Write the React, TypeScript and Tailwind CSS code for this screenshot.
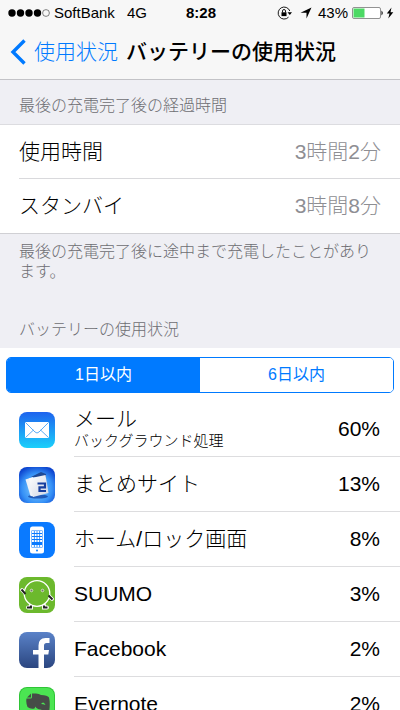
import { ReactNode, useState } from "react";

interface IUsageRow {
    label: string;
    value: string;
}

interface IAppRow {
    name: string;
    detail?: string;
    percent: number;
    icon: ReactNode;
}

const MailIcon = () => (
    <svg viewBox="0 0 36 36" className="size-9">
        <defs>
            <linearGradient id="mail-bg" x1="0" y1="0" x2="0" y2="1">
                <stop offset="0" stopColor="#1e63ee" />
                <stop offset="1" stopColor="#1bd0fb" />
            </linearGradient>
        </defs>
        <rect width="36" height="36" rx="8" fill="url(#mail-bg)" />
        <rect x="6" y="10" width="24" height="16" rx="1" fill="#fff" />
        <path d="M6.500 10.500L16 20q2 2 4 0l9.500-9.500M6.500 25.500l8-7.500M29.500 25.500l-8-7.500" fill="none" stroke="#4aa3f3" strokeWidth="0.9" />
    </svg>
);

const MatomeIcon = () => (
    <svg viewBox="0 0 36 36" className="size-9">
        <defs>
            <radialGradient id="matome-bg" cx="0.5" cy="0.6" r="0.65">
                <stop offset="0" stopColor="#8ad4ff" />
                <stop offset="0.65" stopColor="#3590f6" />
                <stop offset="1" stopColor="#0d45cf" />
            </radialGradient>
            <linearGradient id="matome-paper" x1="0" y1="0" x2="1" y2="1">
                <stop offset="0" stopColor="#fff" />
                <stop offset="1" stopColor="#cfd6e4" />
            </linearGradient>
        </defs>
        <rect width="36" height="36" rx="8" fill="url(#matome-bg)" />
        <ellipse cx="19" cy="29.500" rx="10" ry="2" fill="#0b3a9c" opacity="0.7" />
        <path d="M12 10L22 5l5 2v4z" fill="#1f4a96" />
        <path d="M6.500 12.500L14 10l1 19.500-3.500-.5z" fill="#eef2f8" />
        <path d="M10 11.500l16.500-3.500L29.500 26l-15.500 4z" fill="url(#matome-paper)" />
        <path d="M18.500 16.500H26v3.800h-5.500V24H27" fill="none" stroke="#173f9f" strokeWidth="2.200" />
    </svg>
);

const HomeLockIcon = () => (
    <svg viewBox="0 0 36 36" className="size-9">
        <rect width="36" height="36" rx="8" fill="#0a7aff" />
        <rect x="11" y="4.500" width="14" height="27" rx="2.500" fill="#fff" />
        <rect x="12.500" y="8.500" width="11" height="17" fill="#0a7aff" />
        <path d="M13 10h10M13 13h10M13 16h10M13 19h10M13 24h10" stroke="#fff" strokeWidth="1.800" strokeDasharray="1.900 0.800" />
        <circle cx="18" cy="28.500" r="1" fill="#0a7aff" />
    </svg>
);

const SuumoIcon = () => (
    <svg viewBox="0 0 36 36" className="size-9">
        <rect width="36" height="36" rx="8" fill="#6cb92d" />
        <path d="M3 13l3.500 3.500M33 22l-3-3M12 28v2.500H9M25 28v2.500h3" fill="none" stroke="#fff" strokeWidth="3.800" strokeLinecap="round" />
        <circle cx="18" cy="16.500" r="12.800" fill="#6cb92d" stroke="#fff" strokeWidth="1.300" />
        <path d="M2.500 12.500l4 4.500M33.500 22.500l-4-4M12 28.500v2H8M25 28.500v2h3.500" fill="none" stroke="#222" strokeWidth="1.900" />
        <circle cx="12.500" cy="13.500" r="1.300" fill="#777" stroke="#dfeecf" strokeWidth="0.8" />
        <circle cx="23.500" cy="13.500" r="1.300" fill="#777" stroke="#dfeecf" strokeWidth="0.8" />
    </svg>
);

const FacebookIcon = () => (
    <svg viewBox="0 0 36 36" className="size-9">
        <defs>
            <linearGradient id="fb-bg" x1="0" y1="0" x2="0" y2="1">
                <stop offset="0" stopColor="#5a82c8" />
                <stop offset="1" stopColor="#2b4680" />
            </linearGradient>
        </defs>
        <rect width="36" height="36" rx="8" fill="url(#fb-bg)" />
        <path d="M19.500 36V22.500H14V18h5.500v-4.500q0-7.500 7-7.500H30.500v5H27.500q-2.500 0-2.500 2.500V18H30l-.7 4.500H25V36z" fill="#fff" />
    </svg>
);

const EvernoteIcon = () => (
    <svg viewBox="0 0 36 36" className="size-9">
        <rect width="36" height="36" rx="8" fill="#2fc536" />
        <rect x="1" y="1" width="34" height="34" rx="7" fill="#4be552" />
        <path d="M13 6.500v3.500q0 1.500-1.500 1.500H7.500q-.8 4 1 8.500 3 2.500 7 1.500l1-2q1 2.500 5 3 3 .5 2.500 4h-3q-3 4 2 5 6 1 7-6 1.500-9 0-15-1.500-2.500-8-2.500-2-1.500-5-1.500z" fill="#464c47" />
        <path d="M12 6.500V10.500H8z" fill="#464c47" />
        <path d="M22 17q2.500-3.500 4.500 1-2.500-.8-4.500-1z" fill="#4be552" />
    </svg>
);

const StatusBar = () => (
    <div className="grid h-6 grid-cols-[1fr_auto_1fr] items-center pt-0.5 pr-1.5 pl-2 text-[15px]">
        <div className="flex items-center">
            <svg viewBox="0 0 42 8" className="mr-1 h-2 w-[42px]">
                <circle cx="4" cy="4" r="3.700" />
                <circle cx="12.500" cy="4" r="3.700" />
                <circle cx="21" cy="4" r="3.700" />
                <circle cx="29.500" cy="4" r="3.700" />
                <circle cx="38" cy="4" r="3.400" fill="none" stroke="#333" strokeWidth="0.600" />
            </svg>
            <span>SoftBank</span>
            <span className="ml-3">4G</span>
        </div>
        <span className="font-bold">8:28</span>
        <div className="flex items-center justify-end">
            <svg viewBox="0 0 15 14" className="mr-2 h-[14px] w-[15px]">
                <path d="M12.800 5A6 6 0 1 0 11.500 11.200" fill="none" stroke="#000" strokeWidth="0.900" />
                <path d="M10.500 6.300h4.500l-2.200 2.700z" />
                <rect x="4.500" y="6.300" width="5" height="3.800" />
                <path d="M5.500 6.500V5q0-1.500 1.500-1.500T8.500 5v1.500" fill="none" stroke="#000" strokeWidth="0.900" />
            </svg>
            <svg viewBox="0 0 12 12" className="mr-1.5 size-3">
                <path d="M11.500 0.500L6.500 11.500V5.800H0.500z" />
            </svg>
            <span>43%</span>
            <svg viewBox="0 0 32 12" className="ml-1 h-3 w-8">
                <rect x="0.500" y="0.500" width="28" height="11" rx="1.500" fill="#fff" stroke="#777" strokeWidth="0.800" />
                <rect x="1.500" y="1.500" width="11" height="9" fill="#4cd964" />
                <path d="M29.500 3.500q2.500 2.500 0 5z" />
            </svg>
            <svg viewBox="0 0 8 12" className="ml-0.5 h-3 w-2">
                <path d="M5.500 0.500L0.800 6.500h2.700L2.300 11.500 7.300 5.300H4.500z" />
            </svg>
        </div>
    </div>
);

const NavBar = () => (
    <nav className="flex h-[55px] items-center pl-2.5 text-[21px]">
        <a href="#usage" className="flex items-center font-light text-[#007aff]">
            <svg viewBox="0 0 16 26" className="mr-2 h-[26px] w-4">
                <path d="M14.500 1.500L3 13l11.500 11.500" fill="none" stroke="#007aff" strokeWidth="3.400" />
            </svg>
            使用状況
        </a>
        <h1 className="ml-2 font-medium whitespace-nowrap">バッテリーの使用状況</h1>
    </nav>
);

const usage: IUsageRow[] = [
    { label: "使用時間", value: "3時間2分" },
    { label: "スタンバイ", value: "3時間8分" },
];

const apps: IAppRow[] = [
    { name: "メール", detail: "バックグラウンド処理", percent: 60, icon: <MailIcon /> },
    { name: "まとめサイト", percent: 13, icon: <MatomeIcon /> },
    { name: "ホーム/ロック画面", percent: 8, icon: <HomeLockIcon /> },
    { name: "SUUMO", percent: 3, icon: <SuumoIcon /> },
    { name: "Facebook", percent: 2, icon: <FacebookIcon /> },
    { name: "Evernote", percent: 2, icon: <EvernoteIcon /> },
];

const ranges = ["1日以内", "6日以内"];

const App = () => {
    const [range, setRange] = useState(ranges[0]);

    return (
        <div className="h-screen overflow-hidden bg-white font-['Liberation_Sans','Noto_Sans_CJK_JP',sans-serif] text-black">
            <header className="border-b border-[#c3c3c7] bg-[#f7f7f7]">
                <StatusBar />
                <NavBar />
            </header>
            <main>
                <h2 className="border-b border-[#dcdce0] bg-[#efeff4] px-[19px] pt-3.5 pb-1.5 text-base font-light text-[#6d6d72]">
                    最後の充電完了後の経過時間
                </h2>
                <dl className="pl-[19px] text-[21px] font-light">
                    {usage.map((row) => (
                        <div key={row.label} className="flex h-[54px] items-center justify-between border-b border-[#d9d9dc] pr-[19px] last:border-b-0">
                            <dt>{row.label}</dt>
                            <dd className="text-[#8e8e93]">{row.value}</dd>
                        </div>
                    ))}
                </dl>
                <section className="border-t border-[#d0d0d4] bg-[#efeff4] px-[19px] pt-2 pb-1.5 text-base font-light text-[#6d6d72]">
                    <p className="leading-5">最後の充電完了後に途中まで充電したことがあります。</p>
                    <h2 className="pt-9">バッテリーの使用状況</h2>
                </section>
                <div className="mx-1.5 mt-[9px] flex h-9 overflow-hidden rounded-[5px] border border-[#007aff]">
                    {ranges.map((item) => (
                        <button
                            key={item}
                            type="button"
                            aria-pressed={item === range}
                            onClick={() => setRange(item)}
                            className={item === range ? "flex-1 bg-[#007aff] text-base text-white" : "flex-1 bg-white text-base text-[#007aff]"}
                        >
                            {item}
                        </button>
                    ))}
                </div>
                <ul className="mt-[9px]">
                    {apps.map((app) => (
                        <li key={app.name} className="flex h-[55px] items-center pl-[19px]">
                            {app.icon}
                            <div className="ml-[19px] flex h-full flex-1 items-center justify-between border-b border-[#dddddf] pr-5 text-[21px]">
                                <div className="font-light">
                                    <p className="leading-6">{app.name}</p>
                                    {app.detail && <p className="text-[15px] leading-5">{app.detail}</p>}
                                </div>
                                <span>{app.percent}%</span>
                            </div>
                        </li>
                    ))}
                </ul>
            </main>
        </div>
    );
};

export default App;
